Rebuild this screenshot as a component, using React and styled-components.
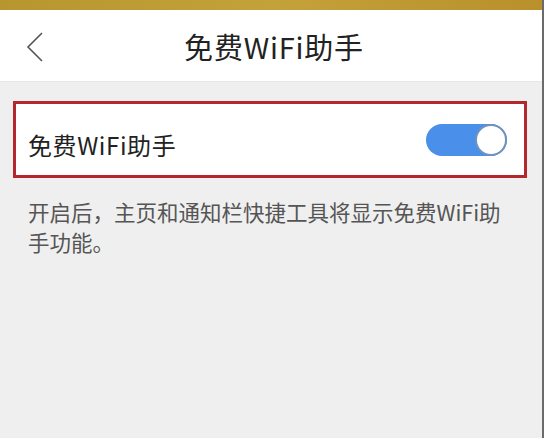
import styled, { createGlobalStyle } from 'styled-components';

const GlobalStyle = createGlobalStyle`
  html, body {
    margin: 0;
    padding: 0;
    background: #efefef;
  }
  body {
    font-family: "Noto Sans CJK SC", "Noto Sans", sans-serif;
  }
`;

function BackIcon() {
  return (
    <svg width="18" height="30" viewBox="0 0 18 30" fill="none">
      <path d="M16 1 L2 15 L16 29" stroke="#555" strokeWidth="1.6" />
    </svg>
  );
}

function Toggle({ on }) {
  return (
    <Track $on={on}>
      <Knob $on={on} />
    </Track>
  );
}

export default function App() {
  return (
    <>
      <GlobalStyle />
      <Screen>
        <StatusBar />
        <Header>
          <BackButton>
            <BackIcon />
          </BackButton>
          <Title>免费WiFi助手</Title>
        </Header>
        <SettingRow>
          <RowLabel>免费WiFi助手</RowLabel>
          <Toggle on />
        </SettingRow>
        <Hint>开启后，主页和通知栏快捷工具将显示免费WiFi助手功能。</Hint>
      </Screen>
    </>
  );
}

const Screen = styled.div`
  width: 542px;
  height: 438px;
  background: #efefef;
  border-right: 2px solid #6b6b6b;
  display: flex;
  flex-direction: column;
  overflow: hidden;
`;

const StatusBar = styled.div`
  height: 10px;
  background: linear-gradient(90deg, #b8962f 0%, #c4a23a 50%, #b8902c 100%);
`;

const Header = styled.div`
  height: 72px;
  background: #fff;
  position: relative;
  display: flex;
  align-items: center;
  justify-content: center;
  border-bottom: 1px solid #e6e6e6;
  box-sizing: border-box;
`;

const BackButton = styled.div`
  position: absolute;
  left: 26px;
  top: 22px;
  display: flex;
`;

const Title = styled.div`
  font-size: 29px;
  color: #222;
  letter-spacing: 0.8px;
  margin-left: 6px;
`;

const SettingRow = styled.div`
  margin: 19px 15px 0 13px;
  height: 77px;
  box-sizing: border-box;
  background: #fff;
  border: 3px solid #b3282d;
  display: flex;
  align-items: center;
  justify-content: space-between;
  padding: 0 17px 0 12px;
`;

const RowLabel = styled.div`
  font-size: 24px;
  color: #222;
  letter-spacing: 0.6px;
  margin-top: 10px;
`;

const Track = styled.div`
  width: 81px;
  height: 32px;
  border-radius: 16px;
  background: ${({ $on }) => ($on ? '#4a8fe9' : '#ccc')};
  display: flex;
  align-items: center;
  justify-content: ${({ $on }) => ($on ? 'flex-end' : 'flex-start')};
  padding: 0;
  box-sizing: border-box;
`;

const Knob = styled.div`
  width: 32px;
  height: 32px;
  border-radius: 50%;
  background: #fff;
  border: 2px solid #6f93bd;
  box-sizing: border-box;
`;

const Hint = styled.div`
  margin: 19px 30px 0 28px;
  font-size: 21.5px;
  line-height: 30px;
  color: #555;
`;
